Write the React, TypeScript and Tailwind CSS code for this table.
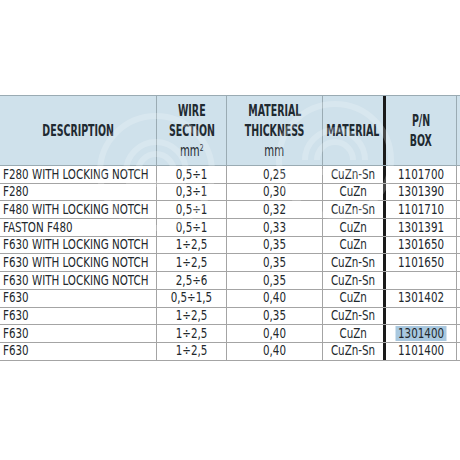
const rows = [
  ["F280 WITH LOCKING NOTCH", "0,5÷1", "0,25", "CuZn-Sn", "1101700"],
  ["F280", "0,3÷1", "0,30", "CuZn", "1301390"],
  ["F480 WITH LOCKING NOTCH", "0,5÷1", "0,32", "CuZn-Sn", "1101710"],
  ["FASTON F480", "0,5÷1", "0,33", "CuZn", "1301391"],
  ["F630 WITH LOCKING NOTCH", "1÷2,5", "0,35", "CuZn", "1301650"],
  ["F630 WITH LOCKING NOTCH", "1÷2,5", "0,35", "CuZn-Sn", "1101650"],
  ["F630 WITH LOCKING NOTCH", "2,5÷6", "0,35", "CuZn-Sn", ""],
  ["F630", "0,5÷1,5", "0,40", "CuZn", "1301402"],
  ["F630", "1÷2,5", "0,35", "CuZn-Sn", ""],
  ["F630", "1÷2,5", "0,40", "CuZn", "1301400"],
  ["F630", "1÷2,5", "0,40", "CuZn-Sn", "1101400"],
];

const grid = "grid grid-cols-[157px_70px_96px_60px_3px_71px_1fr]";
const font = { fontFamily: '"DejaVu Sans Condensed", "DejaVu Sans", sans-serif' };

function Watermark({ className }: { className: string }) {
  return (
    <svg className={className} width="120" height="120" viewBox="0 0 120 120" fill="none">
      <circle cx="60" cy="60" r="56" stroke="white" strokeWidth="6" />
      <path d="M30 60a30 30 0 0 1 60 0" stroke="white" strokeWidth="6" />
      <path d="M42 60a18 18 0 0 1 36 0" stroke="white" strokeWidth="6" />
      <path d="M30 72h60" stroke="white" strokeWidth="6" />
    </svg>
  );
}

export default function App() {
  return (
    <div className="relative w-[460px] h-[460px] bg-white overflow-hidden text-[#1c2328] font-stretch-condensed" style={font}>
      <div className="pt-[95px]">
        <div className={`${grid} h-[71px] bg-[#cfe1eb] border-t border-b border-[#9aabb3] font-bold text-[15px] leading-[20px] text-[#1f2a31]`}>
          <div className="flex items-center justify-center border-r border-[#9aabb3]">
            <span className="scale-x-[0.7]">DESCRIPTION</span>
          </div>
          <div className="flex flex-col items-center justify-center border-r border-[#9aabb3]">
            <span className="scale-x-[0.7]">WIRE</span>
            <span className="scale-x-[0.7]">SECTION</span>
            <span className="font-normal scale-x-[0.75]">
              mm<sup className="text-[9px]">2</sup>
            </span>
          </div>
          <div className="flex flex-col items-center justify-center border-r border-[#9aabb3]">
            <span className="scale-x-[0.7]">MATERIAL</span>
            <span className="scale-x-[0.7] whitespace-nowrap">THICKNESS</span>
            <span className="font-normal scale-x-[0.75]">mm</span>
          </div>
          <div className="flex items-center justify-center">
            <span className="scale-x-[0.7]">MATERIAL</span>
          </div>
          <div className="bg-[#1a1a1a]" />
          <div className="flex flex-col items-center justify-center border-r border-[#9aabb3]">
            <span className="scale-x-[0.7]">P/N</span>
            <span className="scale-x-[0.7]">BOX</span>
          </div>
          <div />
        </div>
        {rows.map((r, i) => (
          <div key={i} className={`${grid} h-[17.7px] border-b border-[#a4a4a4] text-[13.5px] leading-none text-[#22282c]`}>
            <div className="flex items-center pl-[3px] border-r border-[#a4a4a4] whitespace-nowrap">
              <span className="origin-left scale-x-[0.85]">{r[0]}</span>
            </div>
            <div className="flex items-center justify-center border-r border-[#a4a4a4]">
              <span className="scale-x-[0.85]">{r[1]}</span>
            </div>
            <div className="flex items-center justify-center border-r border-[#a4a4a4]">
              <span className="scale-x-[0.85]">{r[2]}</span>
            </div>
            <div className="flex items-center justify-center">
              <span className="scale-x-[0.85]">{r[3]}</span>
            </div>
            <div className="bg-[#1a1a1a]" />
            <div className="flex items-center justify-center border-r border-[#a4a4a4]">
              <span className={i === 9 ? "bg-[#a9c8df] px-[3px] py-[1px] scale-x-[0.85]" : "scale-x-[0.85]"}>{r[4]}</span>
            </div>
            <div />
          </div>
        ))}
      </div>
      <Watermark className="absolute left-[96px] top-[112px] opacity-20" />
      <Watermark className="absolute left-[275px] top-[100px] opacity-20" />
    </div>
  );
}
